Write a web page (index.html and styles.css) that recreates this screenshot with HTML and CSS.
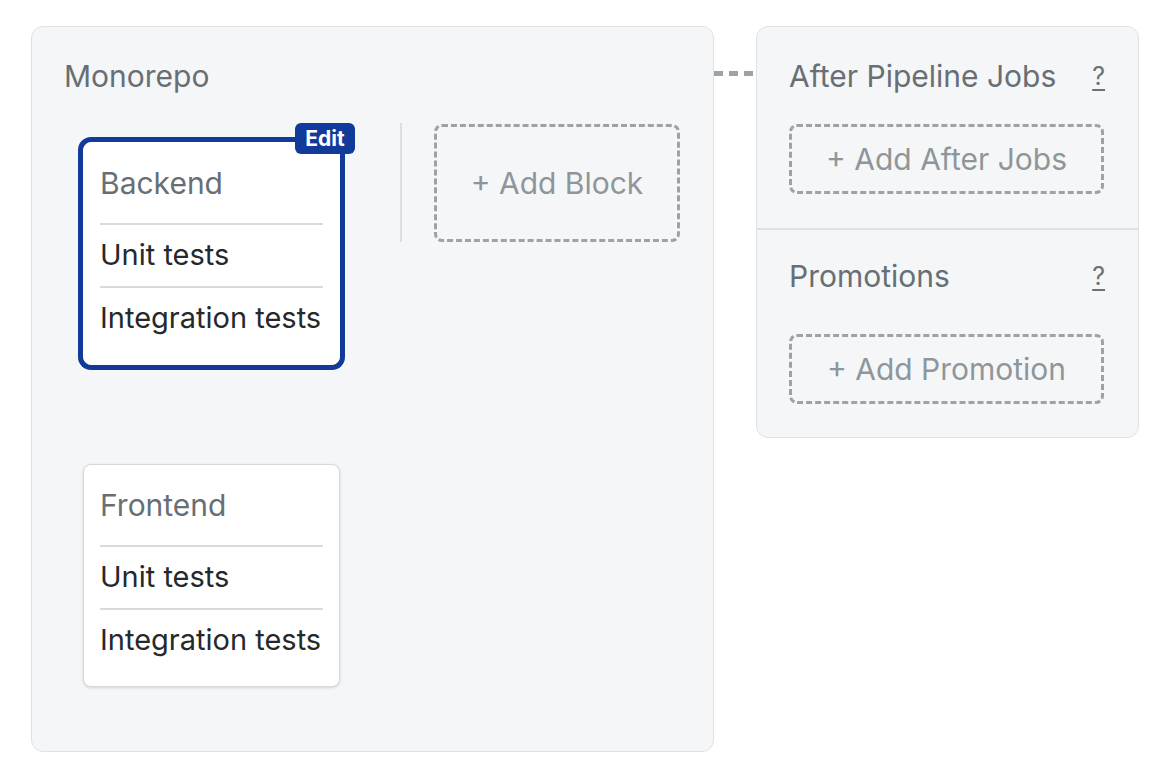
FILE: index.html
```html
<!DOCTYPE html>
<html lang="en">
<head>
    <meta charset="UTF-8">
    <meta name="viewport" content="width=device-width, initial-scale=1.0">
    <title>Workflow Builder</title>
    <link rel="stylesheet" href="styles.css">
</head>
<body>
    <div class="canvas">
        <!-- Pipeline -->
        <div class="pipeline">
            <h2 class="pipeline-title">Monorepo</h2>
            <div class="pipeline-body">
                <div class="block-column">
                    <div class="block selected">
                        <span class="edit-badge">Edit</span>
                        <div class="block-name">Backend</div>
                        <div class="job">Unit tests</div>
                        <div class="job">Integration tests</div>
                    </div>
                    <div class="block">
                        <div class="block-name">Frontend</div>
                        <div class="job">Unit tests</div>
                        <div class="job">Integration tests</div>
                    </div>
                </div>
                <div class="separator"></div>
                <div class="add-box add-block">+ Add Block</div>
            </div>
        </div>

        <div class="connector"></div>

        <!-- After pipeline -->
        <div class="side-panel">
            <div class="side-section">
                <div class="side-head">
                    <span>After Pipeline Jobs</span>
                    <span class="help">?</span>
                </div>
                <div class="add-box add-small">+ Add After Jobs</div>
            </div>
            <div class="side-section promotions">
                <div class="side-head">
                    <span>Promotions</span>
                    <span class="help">?</span>
                </div>
                <div class="add-box add-small">+ Add Promotion</div>
            </div>
        </div>
    </div>
</body>
</html>
```

FILE: styles.css
```css
* {
    margin: 0;
    padding: 0;
    box-sizing: border-box;
}

body {
    font-family: 'Inter', 'Liberation Sans', sans-serif;
    background: #fff;
    color: #24292c;
}

.canvas {
    display: flex;
    align-items: flex-start;
    padding: 26px 0 0 31px;
}

/* Pipeline panel */
.pipeline {
    width: 683px;
    height: 726px;
    background: #f5f6f8;
    border: 1px solid #dfe2e4;
    border-radius: 12px;
    padding: 31px 32px 32px 32px;
}

.pipeline-title {
    font-size: 30px;
    font-weight: 400;
    line-height: 36px;
    color: #676f74;
}

.pipeline-body {
    display: flex;
    align-items: flex-start;
    margin-top: 29px;
}

.block-column {
    display: flex;
    flex-direction: column;
    gap: 99px;
    padding: 19px 0 0 19px;
    margin-right: 60px;
}

.block {
    position: relative;
    width: 257px;
    background: #fff;
    border: 1px solid #d6d9dc;
    border-radius: 8px;
    box-shadow: 0 1px 3px rgba(0, 0, 0, 0.14);
    padding: 0 16px 15px;
}

.block.selected {
    border-color: #fff;
    box-shadow: 0 0 0 5px #123a9a;
}

.edit-badge {
    position: absolute;
    top: -20px;
    right: -16px;
    width: 60px;
    height: 31px;
    background: #123a9a;
    color: #fff;
    border-radius: 6px;
    font-size: 21px;
    font-weight: 700;
    line-height: 31px;
    text-align: center;
}

.block-name,
.job {
    line-height: 36px;
    white-space: nowrap;
}

.block-name {
    font-size: 30px;
    color: #676f74;
    padding: 22px 0;
}

.job {
    font-size: 29px;
    padding: 12px 0 13px;
    border-top: 2px solid #d8dbdd;
}

.separator {
    width: 2px;
    height: 119px;
    background: #dcdfe1;
    margin-right: 32px;
}

/* Dashed add buttons */
.add-box {
    border: 3px dashed #9da2a5;
    border-radius: 8px;
    color: #8f9699;
    font-size: 30px;
    display: flex;
    align-items: center;
    justify-content: center;
}

.add-block {
    width: 246px;
    height: 118px;
    margin-top: 1px;
}

.add-small {
    width: 315px;
    height: 70px;
}

/* Connector line */
.connector {
    width: 42px;
    height: 5px;
    margin-top: 45px;
    background: repeating-linear-gradient(90deg, #9ba3a5 0 9px, transparent 9px 15px);
}

/* Right panel */
.side-panel {
    width: 383px;
    background: #f5f6f8;
    border: 1px solid #dfe2e4;
    border-radius: 12px;
}

.side-section {
    padding: 31px 33px 34px 32px;
}

.side-section + .side-section {
    border-top: 2px solid #dfe2e4;
    padding-top: 28px;
    padding-bottom: 33px;
}

.side-head {
    display: flex;
    justify-content: space-between;
    align-items: center;
    font-size: 30px;
    line-height: 36px;
    color: #676f74;
    margin-bottom: 30px;
}

.promotions .side-head {
    margin-bottom: 40px;
}

.help {
    font-size: 25px;
    text-decoration: underline;
    text-underline-offset: 4px;
    color: #6a7276;
}
```
